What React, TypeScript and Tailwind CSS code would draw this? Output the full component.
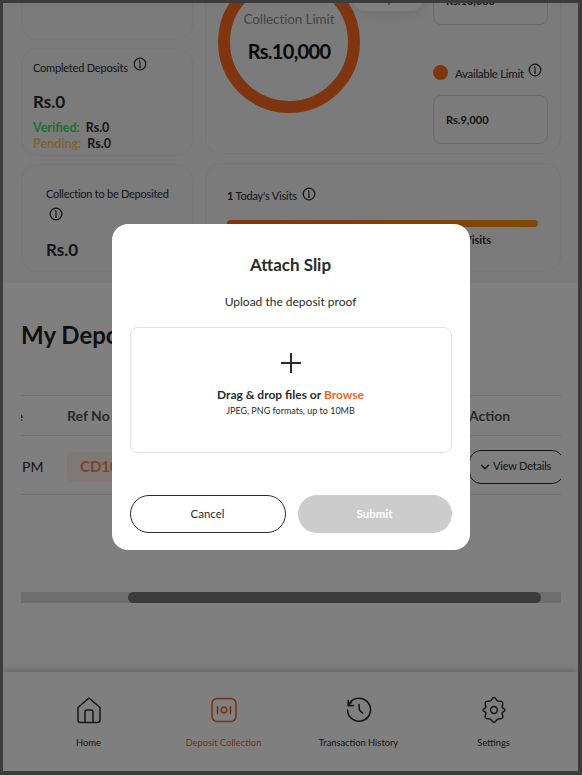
import { ChevronDown } from 'lucide-react';

function InfoIcon({ className = '' }: { className?: string }) {
  return (
    <svg viewBox="0 0 14 14" fill="none" stroke="#2b2b2b" strokeWidth="1.3" className={`w-[14px] h-[14px] shrink-0 ${className}`}>
      <circle cx="7" cy="7" r="5.8" />
      <path d="M7 3.900v6.200M6 3.900h1M6 10.100h2" strokeWidth="1.1" />
    </svg>
  );
}

function HomeIcon() {
  return (
    <svg viewBox="0 0 26 28" fill="none" stroke="#2b2b2b" strokeWidth="1.5" strokeLinejoin="round" className="w-[26px] h-[28px]">
      <path d="M2 11.500 13 2l11 9.500v12.500a2.500 2.500 0 0 1-2.500 2.500h-17A2.500 2.500 0 0 1 2 24z" />
      <path d="M9 26.500V16a2 2 0 0 1 2-2h4a2 2 0 0 1 2 2v10.500" />
    </svg>
  );
}

function DepositIcon() {
  return (
    <svg viewBox="0 0 26 26" fill="none" stroke="#f0641f" strokeWidth="1.5" strokeLinecap="round" className="w-[26px] h-[26px]">
      <rect x="1" y="1.500" width="24" height="23" rx="5" />
      <circle cx="13" cy="13" r="2.800" />
      <path d="M6.500 9.500v7M19.500 9.500v7" />
    </svg>
  );
}

function HistoryIcon() {
  return (
    <svg viewBox="0 0 26 26" fill="none" stroke="#2b2b2b" strokeWidth="1.6" strokeLinecap="round" strokeLinejoin="round" className="w-[26px] h-[26px]">
      <path d="M2.300 8.500A11.500 11.500 0 1 1 1.500 13" />
      <path d="M2.200 3.200v5.400h5.400M5.500 5.200A11.500 11.500 0 0 0 2.300 8.500" />
      <path d="M13 7.500l.4 5.500 3.200 3" />
    </svg>
  );
}

function SettingsIcon() {
  return (
    <svg viewBox="0 0 26 28" fill="none" stroke="#2b2b2b" strokeWidth="1.5" strokeLinejoin="round" className="w-[26px] h-[28px]">
      <path d="M13 1.500c1.800 0 2.200 2.600 3.600 3.400 1.500.8 3.800-.3 4.900 1.200 1.100 1.700-.4 3.400-.4 5 0 1 2.900 1.800 2.900 2.900s-2.900 1.900-2.900 2.900c0 1.600 1.500 3.300.4 5-1.100 1.500-3.400.4-4.900 1.200-1.400.8-1.800 3.400-3.600 3.400s-2.200-2.600-3.600-3.400c-1.500-.8-3.800.3-4.900-1.200-1.100-1.700.4-3.400.4-5 0-1-2.900-1.800-2.900-2.900s2.900-1.900 2.900-2.900c0-1.600-1.500-3.300-.4-5 1.100-1.500 3.400-.4 4.900-1.200C10.800 4.100 11.200 1.500 13 1.500z" />
      <circle cx="13" cy="14" r="3.400" />
    </svg>
  );
}

const navItems = [
  { label: 'Home', icon: <HomeIcon />, active: false },
  { label: 'Deposit Collection', icon: <DepositIcon />, active: true },
  { label: 'Transaction History', icon: <HistoryIcon />, active: false },
  { label: 'Settings', icon: <SettingsIcon />, active: false },
];

export default function App() {
  return (
    <div className="relative w-[582px] h-[775px] overflow-hidden bg-white border-t-[3px] border-l-[3px] border-r-[4px] border-b-[4px] border-[#3c3c3c] font-['Lato',sans-serif] text-[#2b2b2b]">
      <div className="flex flex-col h-full">
        <div className="flex-1 min-h-0 overflow-hidden">
          {/* Summary cards, scrolled part way */}
          <div className="-mt-[53px] pl-[18px] pr-[17px] pb-[11px] bg-[#f7f7f7] flex gap-3">
            <div className="w-[172px] flex flex-col gap-2">
              <div className="h-[90px] rounded-2xl border border-[#ececec]" />
              <div className="h-[108px] rounded-2xl border border-[#ececec] pl-[11px] pt-[8px]">
                <div className="flex items-start gap-[5px] text-[11px] tracking-[-0.2px] leading-[18px]">
                  <span className="pt-[2px]">Completed Deposits</span>
                  <InfoIcon />
                </div>
                <div className="mt-[13px] text-[17px] font-bold leading-6">Rs.0</div>
                <div className="mt-[6px] text-[12.500px] font-bold leading-4">
                  <div className="flex gap-[6px]"><span className="text-[#3cdc64]">Verified:</span><span>Rs.0</span></div>
                  <div className="flex gap-[6px]"><span className="text-[#ffc864]">Pending:</span><span>Rs.0</span></div>
                </div>
              </div>
              <div className="h-[108px] rounded-2xl border border-[#ececec] pl-[24px] pt-[20px]">
                <div className="text-[11px] tracking-[-0.25px] leading-[18px]">Collection to be Deposited</div>
                <InfoIcon className="mt-[4px] ml-[3px]" />
                <div className="mt-[17px] text-[17px] font-bold leading-6">Rs.0</div>
              </div>
            </div>

            <div className="w-[356px] flex flex-col gap-[9px]">
              <div className="relative h-[204px] rounded-2xl border border-[#ececec] flex justify-between pl-[12px] pr-[12px] pt-[20px]">
                <div className="w-[142px] h-[142px] rounded-full border-[12px] border-[#ff6a1f] flex flex-col items-center justify-center">
                  <div className="text-[13.500px] text-[#8a8a8a] tracking-[-0.1px] -mt-[12px]">Collection Limit</div>
                  <div className="mt-[9px] text-[20px] font-bold tracking-[-0.7px] leading-6 text-[#111]">Rs.10,000</div>
                </div>
                <div className="absolute left-[147px] top-0 h-[60px] w-[70px] rounded-xl bg-white shadow-[0_4px_14px_rgba(0,0,0,0.08)] flex items-end justify-center pb-[3px] text-[14px] font-bold text-[#111]">Rs.9,000</div>
                <div className="w-[115px] mt-[6px]">
                  <div className="h-[48px] rounded-lg border border-[#d9d9d9] flex items-center pl-[12px] text-[11px] font-bold">Rs.10,000</div>
                  <div className="mt-[38px] flex items-center">
                    <span className="w-[15px] h-[15px] rounded-full bg-[#ff6a1f]" />
                    <span className="ml-[7px] text-[11.500px] tracking-[-0.3px] mt-[2px]">Available Limit</span>
                    <InfoIcon className="ml-[4px] -mt-[5px]" />
                  </div>
                  <div className="mt-[13px] h-[49px] rounded-lg border border-[#d9d9d9] flex items-center pl-[12px] text-[11px] font-bold">Rs.9,000</div>
                </div>
              </div>
              <div className="h-[109px] rounded-2xl border border-[#ececec] pl-[21px] pr-[22px] pt-[23px]">
                <div className="flex items-start gap-[5px] text-[11px] tracking-[-0.2px] leading-4">
                  <span className="pt-px"><b>1</b> Today's Visits</span>
                  <InfoIcon />
                </div>
                <div className="mt-[16px] h-[7px] rounded-full bg-linear-to-r from-[#ff6a1f] to-[#ff9400]" />
                <div className="mt-[5px] pr-[47px] text-right text-[11px] font-bold leading-4">Pending Visits</div>
              </div>
            </div>
          </div>

          {/* Deposits table */}
          <div className="pl-[18px] pr-[17px]">
            <h2 className="mt-[36px] text-[24px] font-bold leading-8 text-[#1f1f1f]">My Deposits</h2>
            <div className="mt-[44px] overflow-hidden">
              <div className="h-[41px] border-y border-[#e4e4e4] flex items-center text-[14px] font-bold text-[#555]">
                <span className="w-[46px] -ml-[44px] mr-[44px] text-right">Date</span>
                <span>Ref No</span>
                <span className="ml-auto w-[92px]">Action</span>
              </div>
              <div className="h-[59px] border-b border-[#e4e4e4] flex items-center text-[14px]">
                <span className="w-[46px] pl-px mt-[2px]">PM</span>
                <span className="h-[29px] w-[90px] mt-[2px] rounded bg-[#fff1ea] pl-[13px] flex items-center text-[15px] font-bold text-[#f5885a]">CD10</span>
                <div className="ml-auto w-[95px] h-[34px] mt-[3px] -mr-[3px] rounded-xl border border-[#2b2b2b] flex items-center pl-[8px] gap-[1px] text-[11px] tracking-[-0.2px] shrink-0">
                  <ChevronDown size={14} strokeWidth={2.5} />
                  <span>View Details</span>
                </div>
              </div>
            </div>
            <div className="mt-[97px] h-[11px] bg-[#dcdcdc] pl-[107px] pr-[20px]">
              <div className="h-full rounded-full bg-[#777]" />
            </div>
          </div>
        </div>

        {/* Bottom nav */}
        <nav className="shrink-0 h-[99px] bg-white shadow-[0_-3px_6px_rgba(0,0,0,0.18)] pl-[18px] pr-[17px] grid grid-cols-4">
          {navItems.map((item) => (
            <div key={item.label} className="flex flex-col items-center pt-[24px]">
              <div className="h-[28px] flex items-center justify-center">{item.icon}</div>
              <span className={`mt-[12px] text-[9.300px] ${item.active ? 'text-[#f0641f]' : 'text-[#2b2b2b]'}`}>{item.label}</span>
            </div>
          ))}
        </nav>
      </div>

      {/* Modal overlay */}
      <div className="absolute inset-0 bg-black/50 flex items-center justify-center">
        <div className="w-[358px] h-[326px] rounded-2xl bg-white px-[18px] pt-[29px] flex flex-col">
          <h3 className="text-center text-[17px] font-bold leading-6 text-[#2b2b2b]">Attach Slip</h3>
          <p className="mt-[15px] text-center text-[12px] leading-5 text-[#2b2b2b]">Upload the deposit proof</p>
          <div className="mt-[15px] h-[126px] rounded-lg border border-[#e2e2e2] flex flex-col items-center pt-[24px]">
            <svg viewBox="0 0 22 22" fill="none" stroke="#2b2b2b" strokeWidth="2" className="w-[22px] h-[22px]">
              <path d="M11 1v20M1 11h20" />
            </svg>
            <div className="mt-[13px] text-[12px] font-bold leading-4">
              Drag &amp; drop files or <span className="text-[#f0641f]">Browse</span>
            </div>
            <div className="mt-[2px] text-[9px] leading-3">JPEG, PNG formats, up to 10MB</div>
          </div>
          <div className="mt-[42px] flex gap-3">
            <button className="w-[156px] h-[38px] rounded-full border-[1.5px] border-[#2b2b2b] text-[11.500px]">Cancel</button>
            <button className="w-[154px] h-[38px] rounded-full bg-[#cccccc] text-white font-bold text-[11.500px]">Submit</button>
          </div>
        </div>
      </div>
    </div>
  );
}
